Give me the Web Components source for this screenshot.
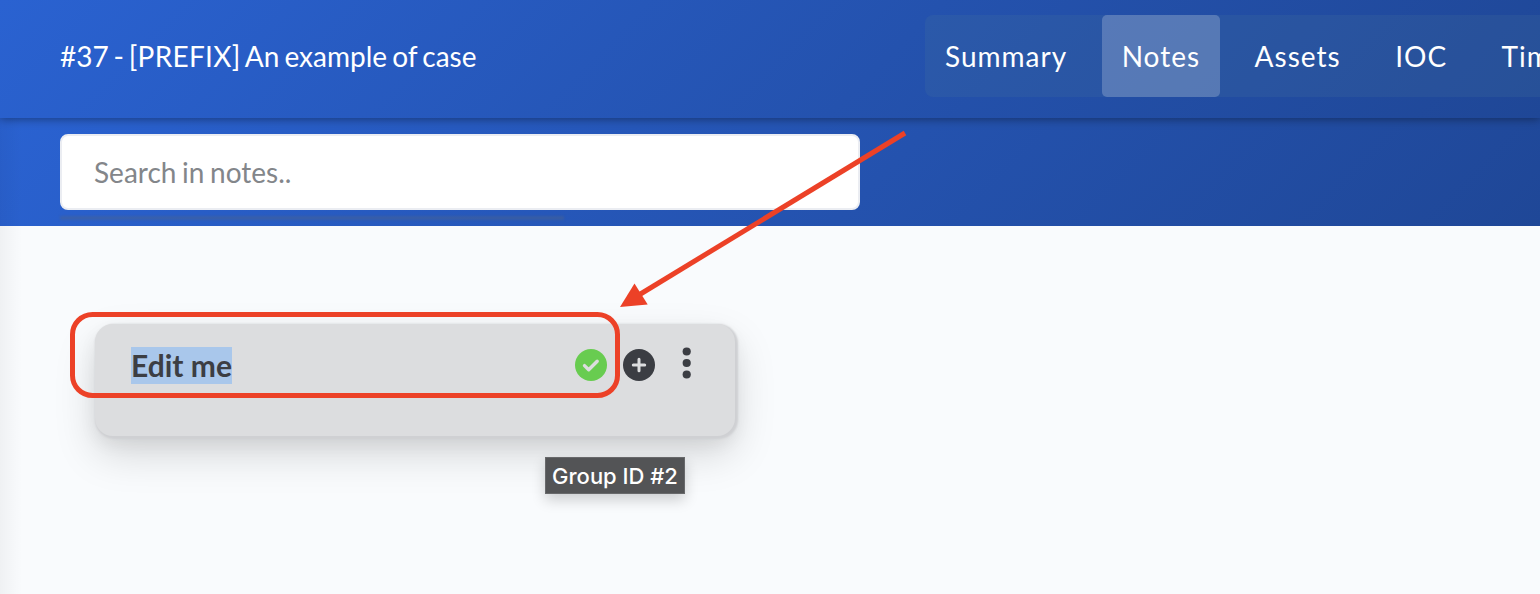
<!DOCTYPE html>
<html lang="en">
<head>
<meta charset="utf-8">
<title>Case notes</title>
<style>
body { margin: 0; overflow: hidden; font-family: Lato, "Liberation Sans", sans-serif; background: #f9fbfd; }
</style>
</head>
<body>
<notes-page></notes-page>
<script>
const define = (name, html) => customElements.define(name, class extends HTMLElement {
  constructor() {
    super();
    const t = document.createElement('template');
    t.innerHTML = html;
    this.attachShadow({ mode: 'open' }).append(t.content.cloneNode(true));
  }
});

define('nav-item', `
<style>
:host { display: flex; align-items: center; box-sizing: border-box; height: 82px; padding: 0 19.5px 0 20px; border-radius: 5px; color: #fff; font-size: 28px; letter-spacing: 1px; white-space: nowrap; }
:host([active]) { background: rgba(255,255,255,.21); }
</style><span><slot></slot></span>`);

define('case-header', `
<style>
:host { display: flex; height: 118px; box-sizing: border-box; padding: 15px 0 0 60px; align-items: flex-start; background: linear-gradient(135deg, #2a62d1 0%, #2452ae 57%, #1f4797 100%); box-shadow: 0 1px 9px rgba(0,0,0,.4); position: relative; z-index: 1; }
h1 { margin: 0; flex: 0 0 865px; font-size: 28px; font-weight: 400; line-height: 82px; color: #fff; white-space: nowrap; word-spacing: -2px; }
.id { word-spacing: -2.4px; }
.prefix { letter-spacing: .3px; }
nav { display: flex; gap: 15px; flex: none; background: rgba(79,122,153,.18); border-radius: 8px; padding-right: 300px; }
</style>
<h1><span class="id">#37 - </span><span class="prefix">[PREFIX]</span> An example of case</h1>
<nav><slot></slot></nav>`);

define('search-bar', `
<style>
:host { display: block; height: 108px; box-sizing: border-box; padding: 16px 0 0 60px; background: linear-gradient(135deg, #2a62d1 0%, #2452ae 57%, #1f4797 100%); }
.box { box-sizing: border-box; width: 800px; height: 76px; border: 2px solid #ebedf2; border-radius: 8px; background: #fff; display: flex; align-items: center; padding: 0 32px; font-size: 28px; word-spacing: -1.5px; color: #83868a; }
.line { width: 504px; height: 4px; margin-top: 6px; background: rgba(72,98,145,.5); filter: blur(1px); }
</style>
<div class="box"><slot></slot></div><div class="line"></div>`);

define('note-group', `
<style>
:host { display: flex; box-sizing: border-box; width: 640px; height: 112px; padding: 23px 32px 0 36px; border-radius: 18px; background: #dcdddf; box-shadow: 1.5px 1.5px 2px 1.5px #cfd0d3, 0 18px 42px rgba(0,0,0,.15), 0 8px 18px rgba(0,0,0,.06); align-items: flex-start; }
.t { font-size: 30px; font-weight: 700; line-height: 37px; color: #3c3e43; background: #a9c7eb; white-space: nowrap; }
.icons { display: flex; gap: 16px; margin-left: auto; }
svg { display: block; width: 32px; height: 36px; }
</style>
<span class="t"><slot></slot></span>
<div class="icons">
<svg viewBox="0 0 32 36"><circle cx="16" cy="18" r="16" fill="#68cc50"/><path d="M9.5 18.6l4.200 4.100L22.200 14.200" fill="none" stroke="#dcdddf" stroke-width="3.4" stroke-linecap="round" stroke-linejoin="round"/></svg>
<svg viewBox="0 0 32 36"><circle cx="16" cy="18" r="16" fill="#3b3d43"/><path d="M16 12.300v11.400M10.300 18h11.400" stroke="#dcdddf" stroke-width="3" stroke-linecap="round"/></svg>
<svg viewBox="0 0 32 36"><g fill="#3b3d43"><circle cx="15.700" cy="4.500" r="4.100"/><circle cx="15.700" cy="16" r="4.100"/><circle cx="15.700" cy="27.500" r="4.100"/></g></svg>
</div>`);

define('hover-tip', `
<style>
:host { position: absolute; left: 545px; top: 457px; width: 140px; height: 37px; box-sizing: border-box; border: 1px solid #68696b; background: #535456; color: #fff; font: 500 22px/36px Inter, sans-serif; text-align: center; white-space: nowrap; box-shadow: 0 6px 14px rgba(0,0,0,.18); }
</style><slot></slot>`);

define('callout-marks', `
<style>
:host { position: absolute; inset: 0; z-index: 3; pointer-events: none; }
svg { display: block; }
</style>
<svg width="1540" height="594" viewBox="0 0 1540 594">
<rect x="72.500" y="314.500" width="545" height="81" rx="20" fill="none" stroke="#ec4127" stroke-width="5"/>
<path d="M905 133L638 295.500" stroke="#ec4127" stroke-width="5"/>
<path d="M620 307L634.500 283.500L647.700 304.500Z" fill="#ec4127"/>
</svg>`);

define('notes-page', `
<style>
:host { display: block; position: relative; width: 1540px; height: 594px; overflow: hidden; background: #f9fbfd; }
main { display: block; height: 368px; box-sizing: border-box; padding: 98px 0 0 95px; }
.edge { position: absolute; left: 0; top: 118px; width: 22px; height: 476px; background: linear-gradient(90deg, rgba(0,0,0,.04), rgba(0,0,0,.014) 60%, transparent); }
</style>
<case-header><nav-item>Summary</nav-item><nav-item active>Notes</nav-item><nav-item>Assets</nav-item><nav-item>IOC</nav-item><nav-item>Timeline</nav-item></case-header>
<search-bar>Search in notes..</search-bar>
<main><note-group>Edit me</note-group></main>
<div class="edge"></div>
<hover-tip>Group ID #2</hover-tip>
<callout-marks></callout-marks>`);
</script>
</body>
</html>
